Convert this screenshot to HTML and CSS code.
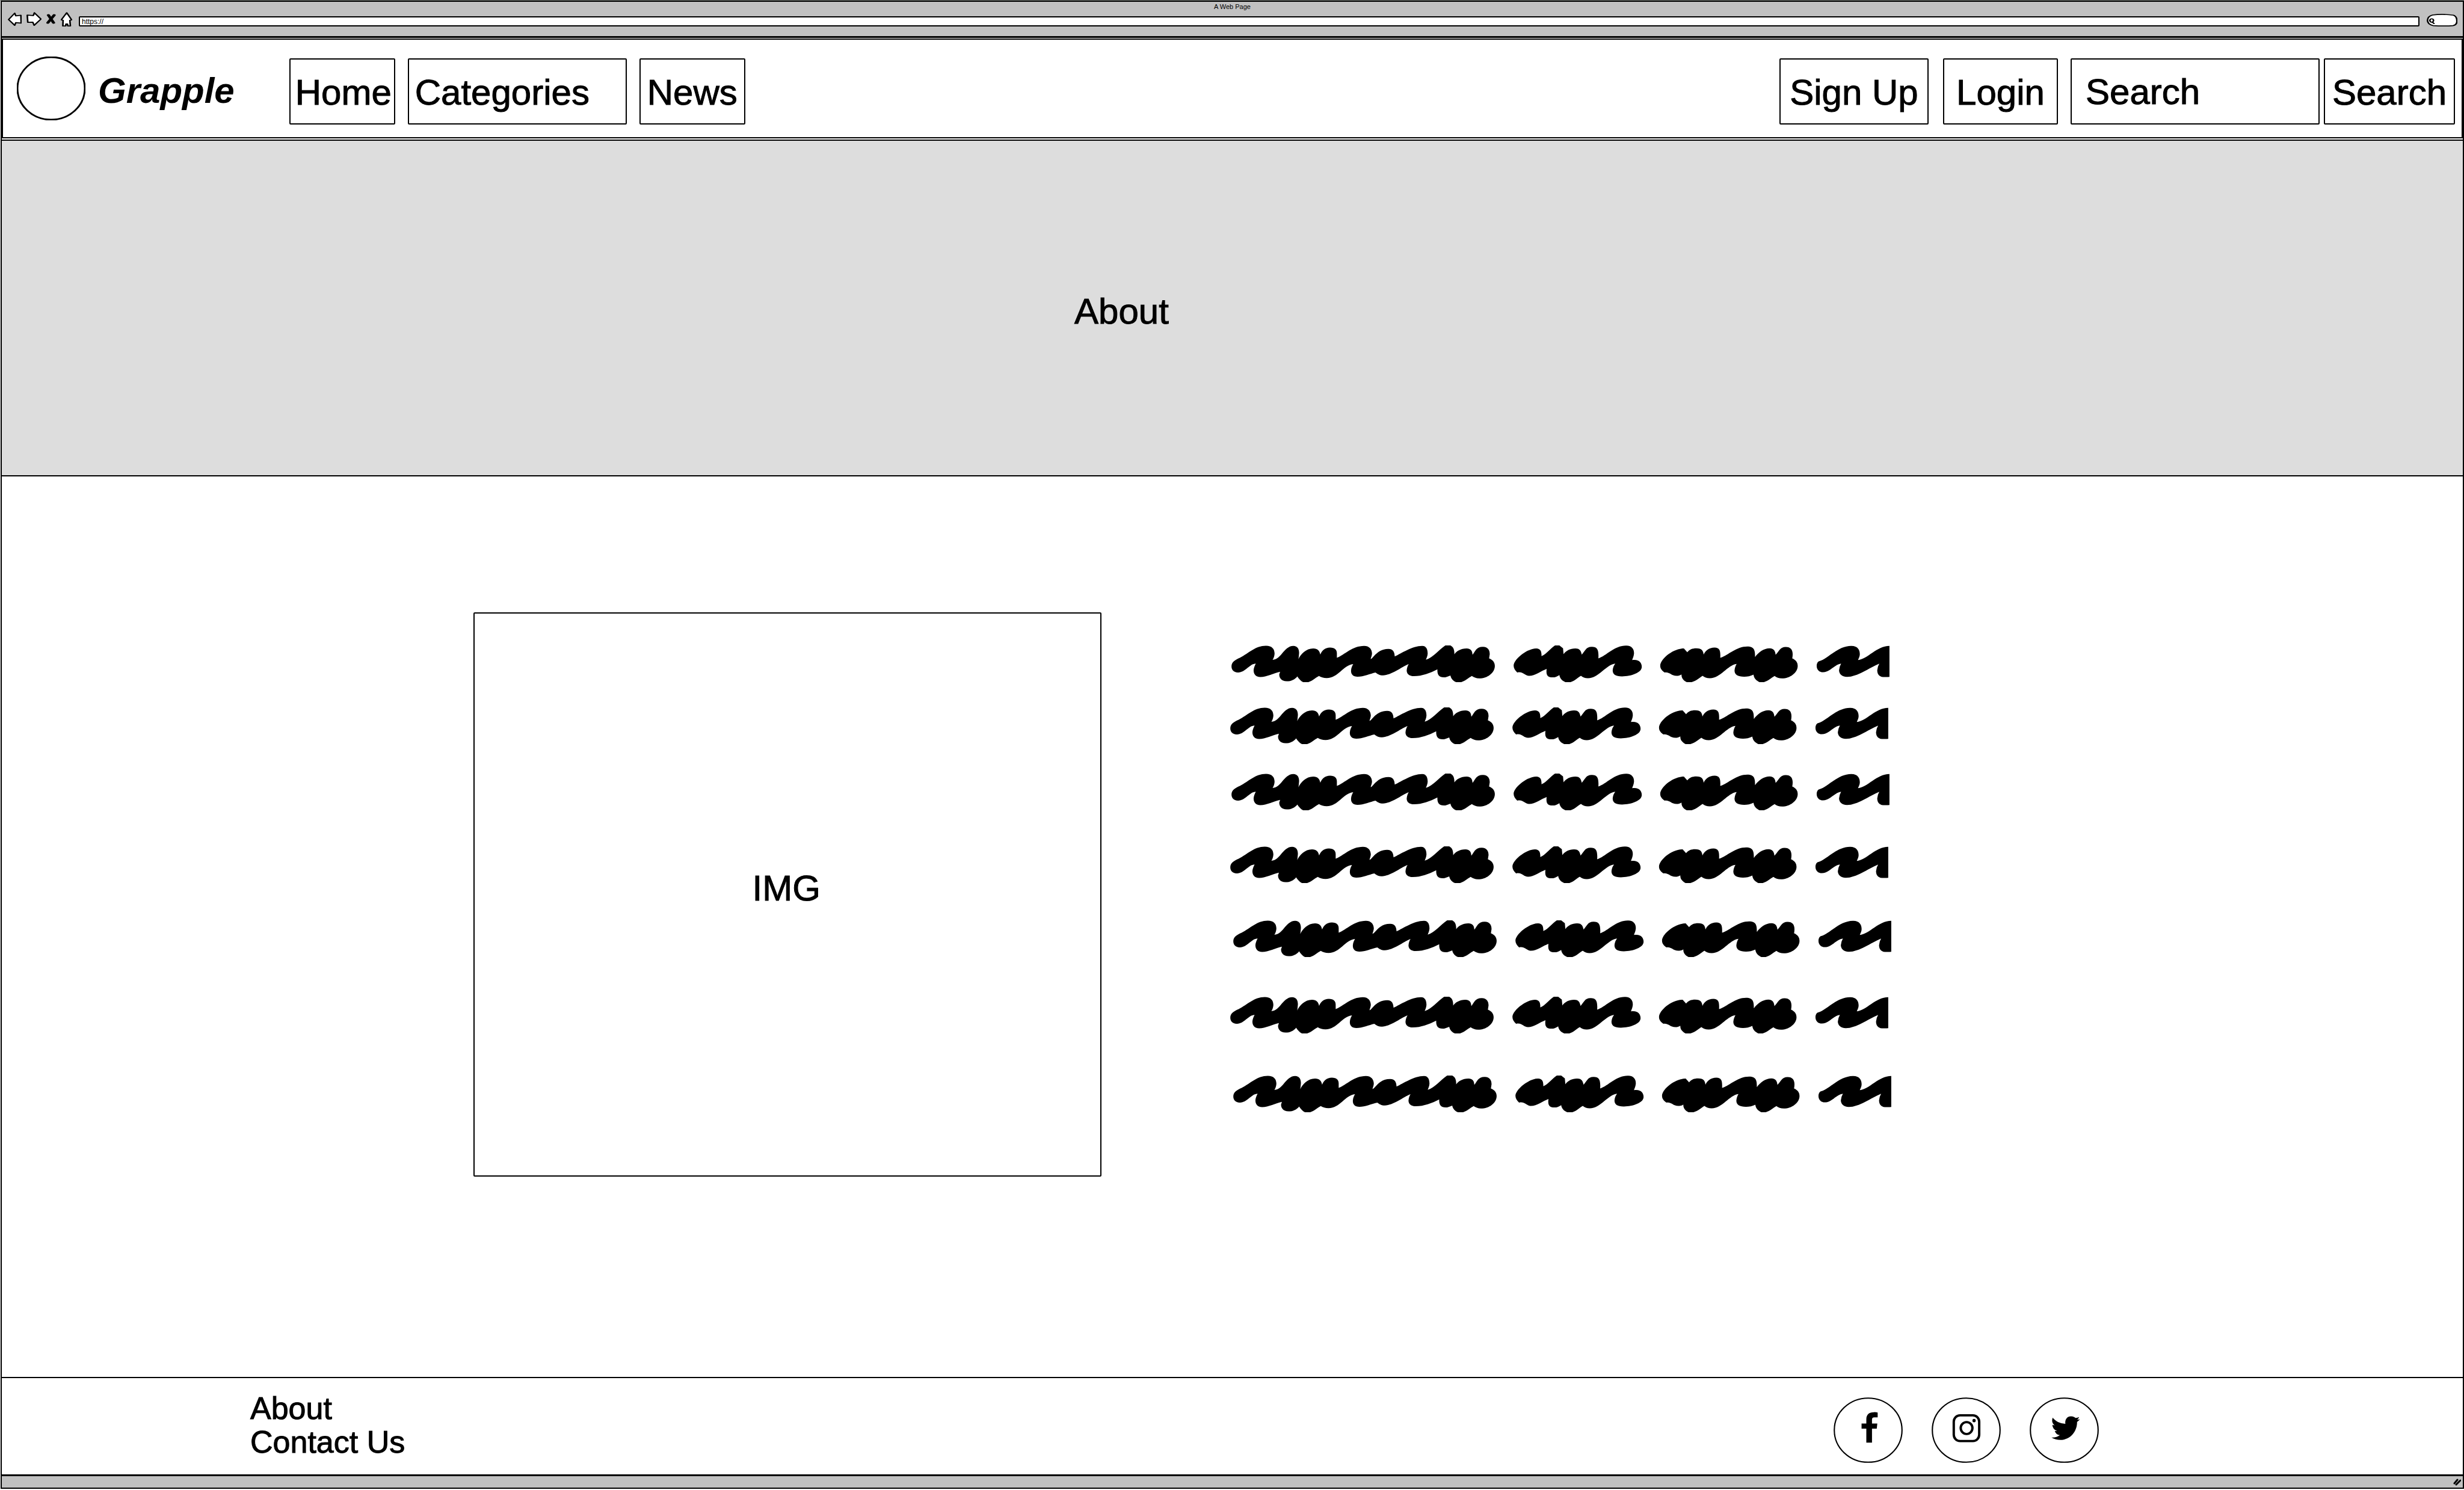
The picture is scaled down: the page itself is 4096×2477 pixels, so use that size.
FILE: index.html
```html
<!DOCTYPE html>
<html lang="en">
<head>
<meta charset="utf-8">
<title>A Web Page</title>
<link rel="stylesheet" href="styles.css">
</head>
<body>
<svg class="defs" aria-hidden="true">
  <symbol id="scribble" viewBox="18 0 1292 72" preserveAspectRatio="none">
    <g transform="scale(.4337 .3333) translate(0 -84)">
      <path d="M42 207C42 182 58 170 80 157C120 130 150 86 198 86C225 86 237 105 237 133C236 150 232 160 228 169C245 168 258 152 270 133C285 110 300 87 322 87C340 87 348 105 348 128C347 145 346 155 345 165C355 135 380 102 412 102C432 102 440 115 444 138C450 115 465 96 488 96C510 96 519 110 519 130L519 157C555 138 590 87 642 87C668 87 678 110 678 133C677 148 673 155 672 164C685 160 700 104 752 104C775 104 780 125 781 149C810 132 860 87 905 87C925 87 930 110 930 133C929 148 925 158 922 168C955 155 980 110 1010 84L1033 84C1048 95 1051 110 1051 136C1060 118 1080 102 1106 102C1128 102 1132 120 1133 139C1145 120 1150 92 1180 92C1203 92 1211 112 1211 135L1208 160C1225 168 1234 185 1234 204C1234 245 1200 278 1163 278C1150 278 1138 272 1130 264C1115 275 1100 293 1082 300L1059 300C1045 293 1036 280 1033 261C1020 268 1012 272 1003 272C980 272 973 255 974 225C940 247 905 265 868 265C845 265 835 250 835 231C836 215 840 203 844 194C810 212 765 260 728 260C712 260 703 252 694 243C670 250 640 268 613 268C592 268 583 255 583 233C584 215 588 205 593 194C548 200 525 276 473 276C458 276 448 272 438 264C422 275 408 293 390 300L366 300C355 293 346 278 340 266C328 285 312 295 292 295C268 295 258 275 258 255L262 239C235 247 200 270 173 270C150 270 142 250 142 230C143 215 147 203 152 191C125 190 105 243 72 243C50 243 42 225 42 207Z"/>
    </g>
    <g transform="translate(540 0) scale(.5102 .3333) translate(0 -84)">
      <path d="M63 204C63 165 115 102 150 102C168 102 171 125 170 147C190 135 205 100 222 84L239 84L253 101L255 135C265 115 280 102 300 102C320 102 322 120 325 138C338 118 340 92 364 92C385 92 391 110 389 160C420 145 450 85 496 85C520 85 527 110 526 133C525 150 521 160 519 170C545 164 556 185 556 210C556 245 515 266 480 266C455 266 444 255 444 230C445 215 448 202 454 191C418 197 390 277 349 277C337 277 330 272 322 263C308 275 298 293 282 300L262 300C250 291 241 280 239 258C228 268 223 272 212 272C192 272 187 255 190 222C170 233 145 263 123 263C105 263 100 235 77 243C68 230 63 218 63 204Z"/>
      <path d="M627 204C627 165 675 102 718 102L731 124C740 108 750 101 766 101C788 101 793 118 794 138C800 115 815 96 836 96C858 96 859 120 858 157C890 140 920 90 962 90C990 90 992 115 992 152C1005 125 1025 101 1048 101C1065 101 1070 120 1071 139C1085 118 1088 93 1110 93C1134 93 1140 120 1135 160C1150 170 1156 185 1156 204C1156 245 1125 278 1096 278C1083 278 1075 274 1067 264C1055 275 1042 293 1026 300L1009 300C997 291 988 280 986 256C975 265 962 268 950 268C925 268 912 255 913 230C914 215 917 203 921 193C885 200 860 277 818 277C806 277 798 272 790 263C778 275 765 293 748 300L729 300C717 291 708 275 709 255C703 261 697 263 690 263C668 263 665 240 644 243C633 232 627 218 627 204Z"/>
      <path d="M1229 205C1229 190 1233 178 1240 176C1270 165 1310 87 1362 87C1388 87 1395 112 1395 136C1395 150 1390 160 1388 170C1425 165 1460 87 1509 87L1509 269Q1500 271 1485 270C1468 268 1462 250 1462 230Q1463 208 1470 191C1430 217 1385 269 1346 269C1325 269 1315 250 1315 230Q1316 208 1323 191C1298 195 1280 242 1254 242C1238 242 1229 225 1229 205Z"/>
    </g>
  </symbol>
</svg>

<div class="window">
  <div class="chrome">
    <div class="chrome-title">A Web Page</div>
    <div class="toolbar">
      <button class="tool tool-back" aria-label="Back"><svg viewBox="30 72 54 75" preserveAspectRatio="none"><path d="M33 111L57 75L61 90L81 87L82 131L61 129L57 144Z"/></svg></button>
      <button class="tool tool-forward" aria-label="Forward"><svg viewBox="103 72 57 79" preserveAspectRatio="none"><path d="M106 90L129 92L133 76L158 112L132 148L127 130L108 131Z"/></svg></button>
      <button class="tool tool-stop" aria-label="Stop"><svg viewBox="181 76 37 62" preserveAspectRatio="none"><path class="cross" d="M189 84L209 130M211 84L187 130"/></svg></button>
      <button class="tool tool-home" aria-label="Home page"><svg viewBox="232 68 44 83" preserveAspectRatio="none"><path d="M255 72L274 113L267 116L269 148H259L258 137H252L251 148H240L241 116L234 113Z"/></svg></button>
      <input class="address" type="text" value="https://" aria-label="Address">
      <button class="tool tool-search" aria-label="Search the web"><svg viewBox="1424 85 117 74" preserveAspectRatio="none"><path d="M1446 92Q1484 84 1526 93Q1540 100 1539 132Q1538 150 1524 154Q1490 158 1448 154Q1427 145 1427 123Q1428 99 1446 92Z"/><ellipse cx="1443" cy="124" rx="7" ry="10"/><path d="M1446 134L1452 142"/></svg></button>
    </div>
  </div>

  <header class="site-header">
    <svg class="logo" viewBox="0 0 114 106" aria-hidden="true"><ellipse cx="57" cy="53" rx="56" ry="52"/></svg>
    <span class="brand">Grapple</span>
    <nav class="nav">
      <a class="box box-home" href="#">Home</a>
      <a class="box box-categories" href="#">Categories</a>
      <a class="box box-news" href="#">News</a>
    </nav>
    <div class="account">
      <button class="box box-signup">Sign Up</button>
      <button class="box box-login">Login</button>
    </div>
    <form class="search">
      <input class="box box-query" type="text" placeholder="Search" aria-label="Search">
      <button class="box box-submit" type="button">Search</button>
    </form>
  </header>

  <section class="hero"><h1>About</h1></section>

  <main class="content">
    <div class="picture">IMG</div>
    <div class="copy">
      <svg><use href="#scribble"/></svg>
      <svg><use href="#scribble"/></svg>
      <svg><use href="#scribble"/></svg>
      <svg><use href="#scribble"/></svg>
      <svg><use href="#scribble"/></svg>
      <svg><use href="#scribble"/></svg>
      <svg><use href="#scribble"/></svg>
    </div>
  </main>

  <footer class="site-footer">
    <nav class="footer-links">
      <a href="#">About</a>
      <a href="#">Contact Us</a>
    </nav>
    <div class="social">
      <a href="#" aria-label="Facebook"><svg viewBox="53 162 378 384" preserveAspectRatio="none"><ellipse class="ring" cx="242" cy="354" rx="185" ry="188"/><path d="M206 315H232V290C232 262 248 249 272 249Q284 248 294 251V279H276C266 279 263 284 263 293V315H292L289 345H263V427H232V345H206Z"/></svg></a>
      <a href="#" aria-label="Instagram"><svg viewBox="596 165 378 384" preserveAspectRatio="none"><ellipse class="ring" cx="785" cy="357" rx="185" ry="188"/><rect class="camera" x="717" y="270" width="139" height="151" rx="34" ry="38"/><ellipse class="camera" cx="787" cy="345" rx="32" ry="35"/><ellipse cx="828" cy="301" rx="9" ry="10"/></svg></a>
      <a href="#" aria-label="Twitter"><svg viewBox="1128 162 378 384" preserveAspectRatio="none"><ellipse class="ring" cx="1317" cy="354" rx="185" ry="188"/><path d="M1254 281C1270 302 1292 315 1323 317C1320 295 1330 273 1354 273C1367 273 1373 278 1379 283C1386 282 1392 280 1398 277C1396 284 1391 289 1387 293L1402 291C1398 297 1393 301 1387 306C1388 360 1350 411 1296 411C1278 411 1262 407 1247 397C1263 399 1280 394 1293 383C1280 382 1270 374 1265 359L1278 358C1262 353 1253 340 1252 322Q1258 326 1265 326C1252 316 1247 300 1254 281Z"/></svg></a>
    </div>
  </footer>

  <div class="status"><svg viewBox="0 0 13 12"><path d="M2 8L7 2M5 10L12 3"/></svg></div>
</div>
</body>
</html>
```
FILE: styles.css
```css
* {
  box-sizing: border-box;
}

body {
  margin: 0;
  min-height: 100vh;
  padding: 0 0 2px 1px;
  border-top: 1px solid #808580;
  display: flex;
  flex-direction: column;
  background: #fff;
  color: #000;
  font-family: "Liberation Sans", Arial, sans-serif;
  font-size: 60px;
  line-height: 68px;
}

a {
  color: inherit;
  text-decoration: none;
}

button,
input {
  margin: 0;
  font: inherit;
  color: inherit;
}

.defs {
  position: absolute;
  width: 0;
  height: 0;
}

.window {
  flex: 1;
  display: flex;
  flex-direction: column;
  border: 2px solid #000;
}

/* Browser frame */
.chrome {
  padding-bottom: 16px;
  background: #c1c1c1;
  border-bottom: 3px solid #000;
}

.chrome-title {
  font-size: 11px;
  line-height: 16px;
  text-align: center;
}

.toolbar {
  display: flex;
  align-items: center;
  gap: 8px;
  height: 25px;
  padding: 0 9px 0 10px;
}

.tool {
  display: block;
  flex: none;
  padding: 0;
  border: 0;
  background: none;
}

.tool svg {
  display: block;
  width: 100%;
  height: 100%;
  fill: #fff;
  stroke: #000;
  stroke-width: 6;
  stroke-linejoin: round;
  stroke-linecap: round;
}

.tool .cross {
  stroke-width: 12;
}

.tool-back {
  width: 23px;
  height: 22px;
}

.tool-forward {
  width: 25px;
  height: 23px;
}

.tool-stop {
  width: 16px;
  height: 17px;
}

.tool-home {
  width: 19px;
  height: 24px;
}

.tool-search {
  align-self: flex-end;
  width: 51px;
  height: 21px;
}

.address {
  flex: 1;
  align-self: flex-end;
  min-width: 0;
  height: 17px;
  margin: 0 4px 0 3px;
  padding: 0 3px;
  border: 2px solid #000;
  border-radius: 2px;
  background: #fff;
  font-size: 12px;
  line-height: 13px;
}

/* Site header */
.site-header {
  display: flex;
  align-items: center;
  height: 166px;
  margin: 1px 0 2px;
  padding: 10px 11px 0 23px;
  border: 2px solid #000;
}

.logo {
  flex: none;
  width: 114px;
  height: 106px;
  margin-bottom: 10px;
  fill: none;
  stroke: #000;
  stroke-width: 3;
}

.brand {
  margin: 0 91px 2px 21px;
  font-weight: bold;
  font-style: italic;
}

.box,
.hero,
.picture,
.footer-links {
  -webkit-text-stroke: 1px #000;
}

.box {
  height: 110px;
  padding: 2px 8px 0;
  border: 2px solid #000;
  border-radius: 2px;
  background: #fff;
  line-height: 106px;
  white-space: nowrap;
  text-align: center;
}

.nav {
  display: flex;
  gap: 21px;
}

.box-home,
.box-news {
  width: 176px;
}

.box-categories {
  width: 364px;
  padding-left: 10px;
  text-align: left;
}

.account {
  display: flex;
  gap: 24px;
  margin-left: auto;
}

.box-signup {
  width: 248px;
}

.box-login {
  width: 191px;
}

.search {
  display: flex;
  gap: 7px;
  margin-left: 21px;
}

.box-query {
  width: 414px;
  padding: 0 23px;
  text-align: left;
}

.box-query::placeholder {
  color: #000;
  opacity: 1;
}

.box-submit {
  width: 218px;
}

/* Banner */
.hero {
  display: grid;
  grid-template-columns: 1783fr 2308fr;
  align-items: center;
  height: 560px;
  padding-top: 12px;
  background: #ddd;
  border-top: 2px solid #000;
  border-bottom: 2px solid #000;
}

.hero h1 {
  grid-column: 2;
  margin: 0;
  font-size: 60px;
  font-weight: normal;
}

/* Picture and copy */
.content {
  flex: 1;
  display: grid;
  grid-template-columns: 785fr 1045fr 214fr 1096fr 951fr;
  align-items: start;
  padding: 226px 0;
}

.picture {
  grid-column: 2;
  display: flex;
  align-items: center;
  justify-content: center;
  aspect-ratio: 1045 / 939;
  padding: 0 4px 20px 0;
  border: 2px solid #000;
  border-radius: 2px;
}

.copy {
  grid-column: 4;
  display: grid;
  grid-template-rows: 103px 110px 121px 123px 127px 131px 61px;
  padding-top: 55px;
}

.copy svg {
  width: 1094px;
  height: 61px;
}

.copy svg:nth-child(odd) {
  margin-left: 2px;
}

.copy svg:nth-child(4n + 5),
.copy svg:nth-child(7) {
  margin-left: 5px;
}

/* Footer */
.site-footer {
  display: grid;
  grid-template-columns: 413fr 2632fr 1046fr;
  border-top: 2px solid #000;
}

.footer-links {
  grid-column: 2;
  display: flex;
  flex-direction: column;
  align-items: flex-start;
  padding: 22px 0 26px;
  font-size: 52px;
  line-height: 56px;
}

.social {
  display: flex;
  align-items: flex-start;
  gap: 48px;
  padding-top: 32px;
}

.social svg {
  display: block;
  width: 115px;
  height: 109px;
}

.social .ring,
.social .camera {
  fill: none;
  stroke: #000;
  stroke-width: 7;
}

.social .camera {
  stroke-width: 13;
}

.status {
  display: flex;
  align-items: center;
  justify-content: flex-end;
  height: 22px;
  padding-right: 3px;
  background: #c1c1c1;
  border-top: 3px solid #000;
}

.status svg {
  width: 13px;
  height: 12px;
  fill: none;
  stroke: #000;
  stroke-width: 3;
  stroke-linecap: round;
}
```
